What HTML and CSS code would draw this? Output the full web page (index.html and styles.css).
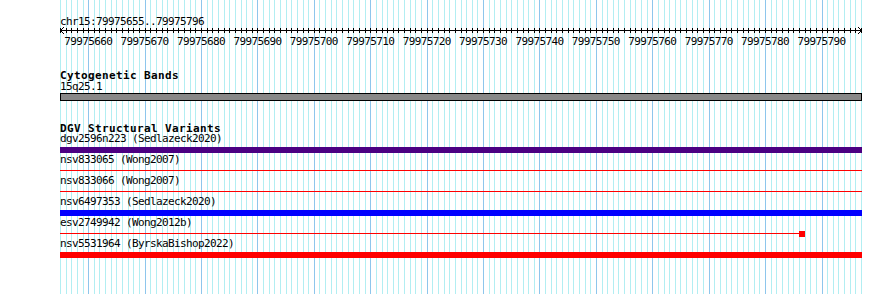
FILE: index.html
```html
<!DOCTYPE html>
<html lang="en">
<head>
    <meta charset="UTF-8">
    <title>chr15:79975655..79975796</title>
    <link rel="stylesheet" href="styles.css">
</head>
<body>
    <div class="browser">
        <svg class="guides" id="guides" width="890" height="294"></svg>
        <div class="tracks">
            <div class="position">chr15:79975655..79975796</div>
            <svg class="ruler" id="ruler" width="802" height="8"></svg>
            <div class="ruler-labels">
                <span>79975660</span>
                <span>79975670</span>
                <span>79975680</span>
                <span>79975690</span>
                <span>79975700</span>
                <span>79975710</span>
                <span>79975720</span>
                <span>79975730</span>
                <span>79975740</span>
                <span>79975750</span>
                <span>79975760</span>
                <span>79975770</span>
                <span>79975780</span>
                <span>79975790</span>
            </div>

            <div class="track cyto">
                <div class="track-title">Cytogenetic Bands</div>
                <div class="item-label">15q25.1</div>
                <div class="band"></div>
            </div>

            <div class="track dgv">
                <div class="track-title">DGV Structural Variants</div>
                <div class="item">
                    <div class="item-label">dgv2596n223 (Sedlazeck2020)</div>
                    <div class="feature"><div class="thick purple full"></div></div>
                </div>
                <div class="item">
                    <div class="item-label">nsv833065 (Wong2007)</div>
                    <div class="feature"><div class="thin red full"></div></div>
                </div>
                <div class="item">
                    <div class="item-label">nsv833066 (Wong2007)</div>
                    <div class="feature"><div class="thin red full"></div></div>
                </div>
                <div class="item">
                    <div class="item-label">nsv6497353 (Sedlazeck2020)</div>
                    <div class="feature"><div class="thick blue full"></div></div>
                </div>
                <div class="item">
                    <div class="item-label">esv2749942 (Wong2012b)</div>
                    <div class="feature">
                        <div class="thin red" style="width: 739px"></div>
                        <div class="thick red" style="width: 6px"></div>
                    </div>
                </div>
                <div class="item">
                    <div class="item-label">nsv5531964 (ByrskaBishop2022)</div>
                    <div class="feature"><div class="thick red full"></div></div>
                </div>
            </div>
        </div>
    </div>

    <script src="script.js"></script>
</body>
</html>
```

FILE: styles.css
```css
body { margin: 0; background: #fff; color: #000; font-family: "DejaVu Sans Mono", "Liberation Mono", monospace; font-size: 11px; line-height: 11px; letter-spacing: -0.62px; }
.browser { position: relative; width: 890px; height: 294px; overflow: hidden; }
.guides { position: absolute; left: 0; top: 0; }
.tracks { position: relative; margin-left: 60px; width: 802px; padding-top: 16px; }
.position { height: 11px; white-space: nowrap; }
.ruler { display: block; }
.ruler-labels { display: flex; height: 11px; margin-top: 1px; white-space: nowrap; }
.ruler-labels span { flex: 0 0 56.408px; text-align: center; }
.track-title { height: 11px; font-weight: bold; letter-spacing: 0.38px; white-space: nowrap; }
.item-label { height: 11px; white-space: nowrap; }
.cyto { margin-top: 23px; }
.band { box-sizing: border-box; height: 8px; margin-top: 1px; background: #888; border: 1px solid #000; }
.dgv { margin-top: 22px; }
.dgv .track-title { height: 10px; }
.item { height: 21px; }
.feature { display: flex; align-items: flex-start; height: 6px; margin-top: 3px; }
.thick { height: 6px; }
.thin { height: 1px; margin-top: 2px; }
.full { flex: 1; }
.purple { background: #4b0082; }
.blue { background: #0000ff; }
.red { background: #ff0000; }
```

FILE: script.js
```js
var first = 79975655, last = 79975796;
var left = 60, span = 801;
var perBase = span / (last - first + 1);
var ns = 'http://www.w3.org/2000/svg';

function rect(svg, x, y, w, h, fill) {
    var r = document.createElementNS(ns, 'rect');
    r.setAttribute('x', x);
    r.setAttribute('y', y);
    r.setAttribute('width', w);
    r.setAttribute('height', h);
    r.setAttribute('fill', fill);
    svg.appendChild(r);
}

// light guide line for every base, darker one every 10
var guides = document.getElementById('guides');
for (var i = 0; i <= last - first + 1; i++) {
    var x = Math.round(left + i * perBase);
    rect(guides, x, 0, 1, 294, (first + i) % 10 == 0 ? '#8ec6ec' : '#b2eef2');
}

// ruler: base line, ticks and arrow heads
var ruler = document.getElementById('ruler');
rect(ruler, 0, 3, 802, 1, '#000');
for (var i = 0; i <= last - first + 1; i++) {
    rect(ruler, Math.round(i * perBase), 1, 1, 5, '#000');
}
for (var k = 1; k <= 3; k++) {
    rect(ruler, k, 3 - k, 1, 1, '#000');
    rect(ruler, k, 3 + k, 1, 1, '#000');
    rect(ruler, 801 - k, 3 - k, 1, 1, '#000');
    rect(ruler, 801 - k, 3 + k, 1, 1, '#000');
}
```
